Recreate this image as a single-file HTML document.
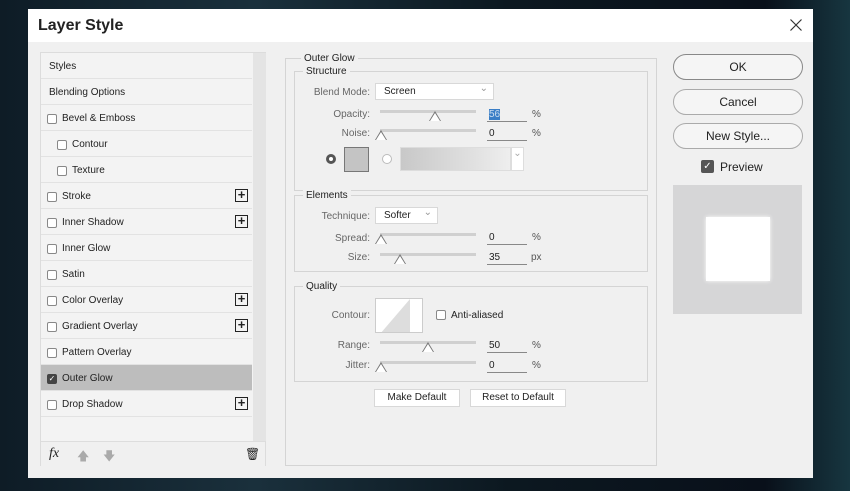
<!DOCTYPE html><html><head><style>
*{box-sizing:border-box;margin:0;padding:0}
body{width:850px;height:491px;overflow:hidden;background:linear-gradient(90deg,#0e1c26,#1a303c 30%,#0c1820 60%,#09101a 90%,#173640);font-family:"Liberation Sans",sans-serif;font-size:10px;color:#222;position:relative}
.a{position:absolute}
.dlg{left:28px;top:9px;width:785px;height:469px;background:#f0f0f0}
.title{left:0;top:0;width:785px;height:33px;background:#fff;font-size:16px;font-weight:bold;padding:8px 0 0 10px;color:#222}
.list{left:12px;top:43px;width:226px;height:414px;background:#f3f3f3;border:1px solid #dcdcdc}
.scroll{left:212px;top:0;width:13px;height:388px;background:#e4e4e4}
.it{position:absolute;left:0;width:211px;height:26px;border-bottom:1px solid #e2e2e2;line-height:27px;padding-left:8px}
.cb{position:absolute;top:9px;width:10px;height:10px;border:1px solid #888;background:#fff;border-radius:2px}
.plus{position:absolute;right:4px;top:6px;width:13px;height:13px;border:1px solid #222;font-size:13px;line-height:10px;text-align:center;font-weight:bold}
.grp{position:absolute;border:1px solid #d4d4d4}
.lg{position:absolute;background:#f0f0f0;padding:0 3px;top:-6px;left:8px;font-size:10px}
.lbl{position:absolute;text-align:right;color:#666}
.sl{position:absolute;height:3px;background:#d0d0d0}
.th{position:absolute;width:0;height:0;border-left:6px solid transparent;border-right:6px solid transparent;border-bottom:10px solid #777}
.th:after{content:"";position:absolute;left:-5px;top:2px;border-left:5px solid transparent;border-right:5px solid transparent;border-bottom:8px solid #fff}
.inp{position:absolute;width:40px;border-bottom:1px solid #888;height:13px;padding-left:2px}
.dd{position:absolute;background:#fff;border:1px solid #d8d8d8;height:17px;line-height:15px;padding-left:8px}
.dd:after{content:"⌄";position:absolute;right:5px;top:-3px;color:#999}
.btn{position:absolute;border:1px solid #888;border-radius:13px;background:#f5f5f5;text-align:center;font-size:12px;height:26px;line-height:24px}
.sb{position:absolute;background:#fff;border:1px solid #d8d8d8;height:18px;line-height:16px;text-align:center}
</style></head><body>
<div class="a dlg">
<div class="a title">Layer Style</div>
<svg class="a" style="right:11px;top:10px" width="12" height="12" viewBox="0 0 12 12"><path d="M0.5 0.5L11.5 11.5M11.5 0.5L0.5 11.5" stroke="#333" stroke-width="1.2"/></svg>
<div class="a list">
<div class="a scroll"></div>
<div class="it" style="top:0">Styles</div>
<div class="it" style="top:26px">Blending Options</div>
<div class="it" style="top:52px;padding-left:21px"><span class="cb" style="left:6px"></span>Bevel &amp; Emboss</div>
<div class="it" style="top:78px;padding-left:31px"><span class="cb" style="left:16px"></span>Contour</div>
<div class="it" style="top:104px;padding-left:31px"><span class="cb" style="left:16px"></span>Texture</div>
<div class="it" style="top:130px;padding-left:21px"><span class="cb" style="left:6px"></span>Stroke<span class="plus">+</span></div>
<div class="it" style="top:156px;padding-left:21px"><span class="cb" style="left:6px"></span>Inner Shadow<span class="plus">+</span></div>
<div class="it" style="top:182px;padding-left:21px"><span class="cb" style="left:6px"></span>Inner Glow</div>
<div class="it" style="top:208px;padding-left:21px"><span class="cb" style="left:6px"></span>Satin</div>
<div class="it" style="top:234px;padding-left:21px"><span class="cb" style="left:6px"></span>Color Overlay<span class="plus">+</span></div>
<div class="it" style="top:260px;padding-left:21px"><span class="cb" style="left:6px"></span>Gradient Overlay<span class="plus">+</span></div>
<div class="it" style="top:286px;padding-left:21px"><span class="cb" style="left:6px"></span>Pattern Overlay</div>
<div class="it" style="top:312px;padding-left:21px;background:#bdbdbd"><span class="cb" style="left:6px;background:#444;border-color:#444;color:#fff;font-size:8px;line-height:8px;text-align:center">✓</span>Outer Glow</div>
<div class="it" style="top:338px;padding-left:21px"><span class="cb" style="left:6px"></span>Drop Shadow<span class="plus">+</span></div>
<div class="a" style="left:0;top:388px;width:224px;height:25px;background:#f0f0f0;border-top:1px solid #ddd"></div>
<div class="a" style="left:8px;top:393px;font-style:italic;font-family:'Liberation Serif',serif;font-size:14px">fx</div>
<div class="a" style="left:36px;top:394px;color:#aaa;font-size:12px">🡅</div>
<div class="a" style="left:62px;top:394px;color:#aaa;font-size:12px">🡇</div>
<div class="a" style="left:204px;top:394px;font-size:12px">🗑</div>
</div>
<div class="grp" style="left:257px;top:49px;width:372px;height:408px"><span class="lg" style="left:15px">Outer Glow</span></div>
<div class="grp" style="left:266px;top:62px;width:354px;height:120px"><span class="lg">Structure</span></div>
<div class="lbl" style="left:270px;top:78px;width:72px">Blend Mode:</div>
<div class="dd" style="left:347px;top:74px;width:119px">Screen</div>
<div class="lbl" style="left:270px;top:100px;width:72px">Opacity:</div>
<div class="sl" style="left:352px;top:101px;width:96px"></div><div class="th" style="left:401px;top:102px"></div>
<div class="inp" style="left:459px;top:100px"><span style="background:#3a7ec6;color:#cde">56</span></div><div class="a" style="left:504px;top:100px;color:#555">%</div>
<div class="lbl" style="left:270px;top:119px;width:72px">Noise:</div>
<div class="sl" style="left:352px;top:120px;width:96px"></div><div class="th" style="left:347px;top:121px"></div>
<div class="inp" style="left:459px;top:119px">0</div><div class="a" style="left:504px;top:119px;color:#555">%</div>
<div class="a" style="left:298px;top:145px;width:10px;height:10px;border-radius:50%;border:3px solid #555;background:#fff"></div>
<div class="a" style="left:316px;top:138px;width:25px;height:25px;background:#c4c4c4;border:1px solid #777"></div>
<div class="a" style="left:354px;top:145px;width:10px;height:10px;border-radius:50%;border:1px solid #bbb;background:#fff"></div>
<div class="a" style="left:372px;top:138px;width:111px;height:24px;background:linear-gradient(90deg,#c8c8c8,#dedede 60%,#eee);border:1px solid #ddd"></div>
<div class="a" style="left:483px;top:138px;width:13px;height:24px;background:#fff;border:1px solid #ddd;color:#aaa;text-align:center">⌄</div>
<div class="grp" style="left:266px;top:186px;width:354px;height:77px"><span class="lg">Elements</span></div>
<div class="lbl" style="left:270px;top:202px;width:72px">Technique:</div>
<div class="dd" style="left:347px;top:198px;width:63px">Softer</div>
<div class="lbl" style="left:270px;top:224px;width:72px">Spread:</div>
<div class="sl" style="left:352px;top:224px;width:96px"></div><div class="th" style="left:347px;top:225px"></div>
<div class="inp" style="left:459px;top:223px">0</div><div class="a" style="left:504px;top:223px;color:#555">%</div>
<div class="lbl" style="left:270px;top:243px;width:72px">Size:</div>
<div class="sl" style="left:352px;top:244px;width:96px"></div><div class="th" style="left:366px;top:245px"></div>
<div class="inp" style="left:459px;top:243px">35</div><div class="a" style="left:503px;top:243px;color:#555">px</div>
<div class="grp" style="left:266px;top:277px;width:354px;height:96px"><span class="lg">Quality</span></div>
<div class="lbl" style="left:270px;top:301px;width:72px">Contour:</div>
<div class="a" style="left:347px;top:289px;width:48px;height:35px;background:#fff;border:1px solid #ccc;overflow:hidden"><div style="width:0;height:0;border-left:30px solid transparent;border-bottom:35px solid #ddd;position:absolute;left:4px"></div></div>
<div class="a" style="left:408px;top:301px;width:10px;height:10px;border:1px solid #888;border-radius:2px;background:#fff"></div>
<div class="a" style="left:423px;top:301px">Anti-aliased</div>
<div class="lbl" style="left:270px;top:331px;width:72px">Range:</div>
<div class="sl" style="left:352px;top:332px;width:96px"></div><div class="th" style="left:394px;top:333px"></div>
<div class="inp" style="left:459px;top:331px">50</div><div class="a" style="left:504px;top:331px;color:#555">%</div>
<div class="lbl" style="left:270px;top:351px;width:72px">Jitter:</div>
<div class="sl" style="left:352px;top:352px;width:96px"></div><div class="th" style="left:347px;top:353px"></div>
<div class="inp" style="left:459px;top:351px">0</div><div class="a" style="left:504px;top:351px;color:#555">%</div>
<div class="sb" style="left:346px;top:380px;width:86px">Make Default</div>
<div class="sb" style="left:442px;top:380px;width:96px">Reset to Default</div>
<div class="btn" style="left:645px;top:45px;width:130px">OK</div>
<div class="btn" style="left:645px;top:80px;width:130px;border-color:#aaa">Cancel</div>
<div class="btn" style="left:645px;top:114px;width:130px;border-color:#aaa">New Style...</div>
<div class="a" style="left:673px;top:151px;width:13px;height:13px;background:#555;border-radius:2px;color:#fff;font-size:10px;line-height:13px;text-align:center">✓</div>
<div class="a" style="left:692px;top:151px;font-size:12px">Preview</div>
<div class="a" style="left:645px;top:176px;width:129px;height:129px;background:#d6d6d7"></div>
<div class="a" style="left:678px;top:208px;width:64px;height:64px;background:#fff;box-shadow:0 0 4px #fff"></div>
</div>
</body></html>
